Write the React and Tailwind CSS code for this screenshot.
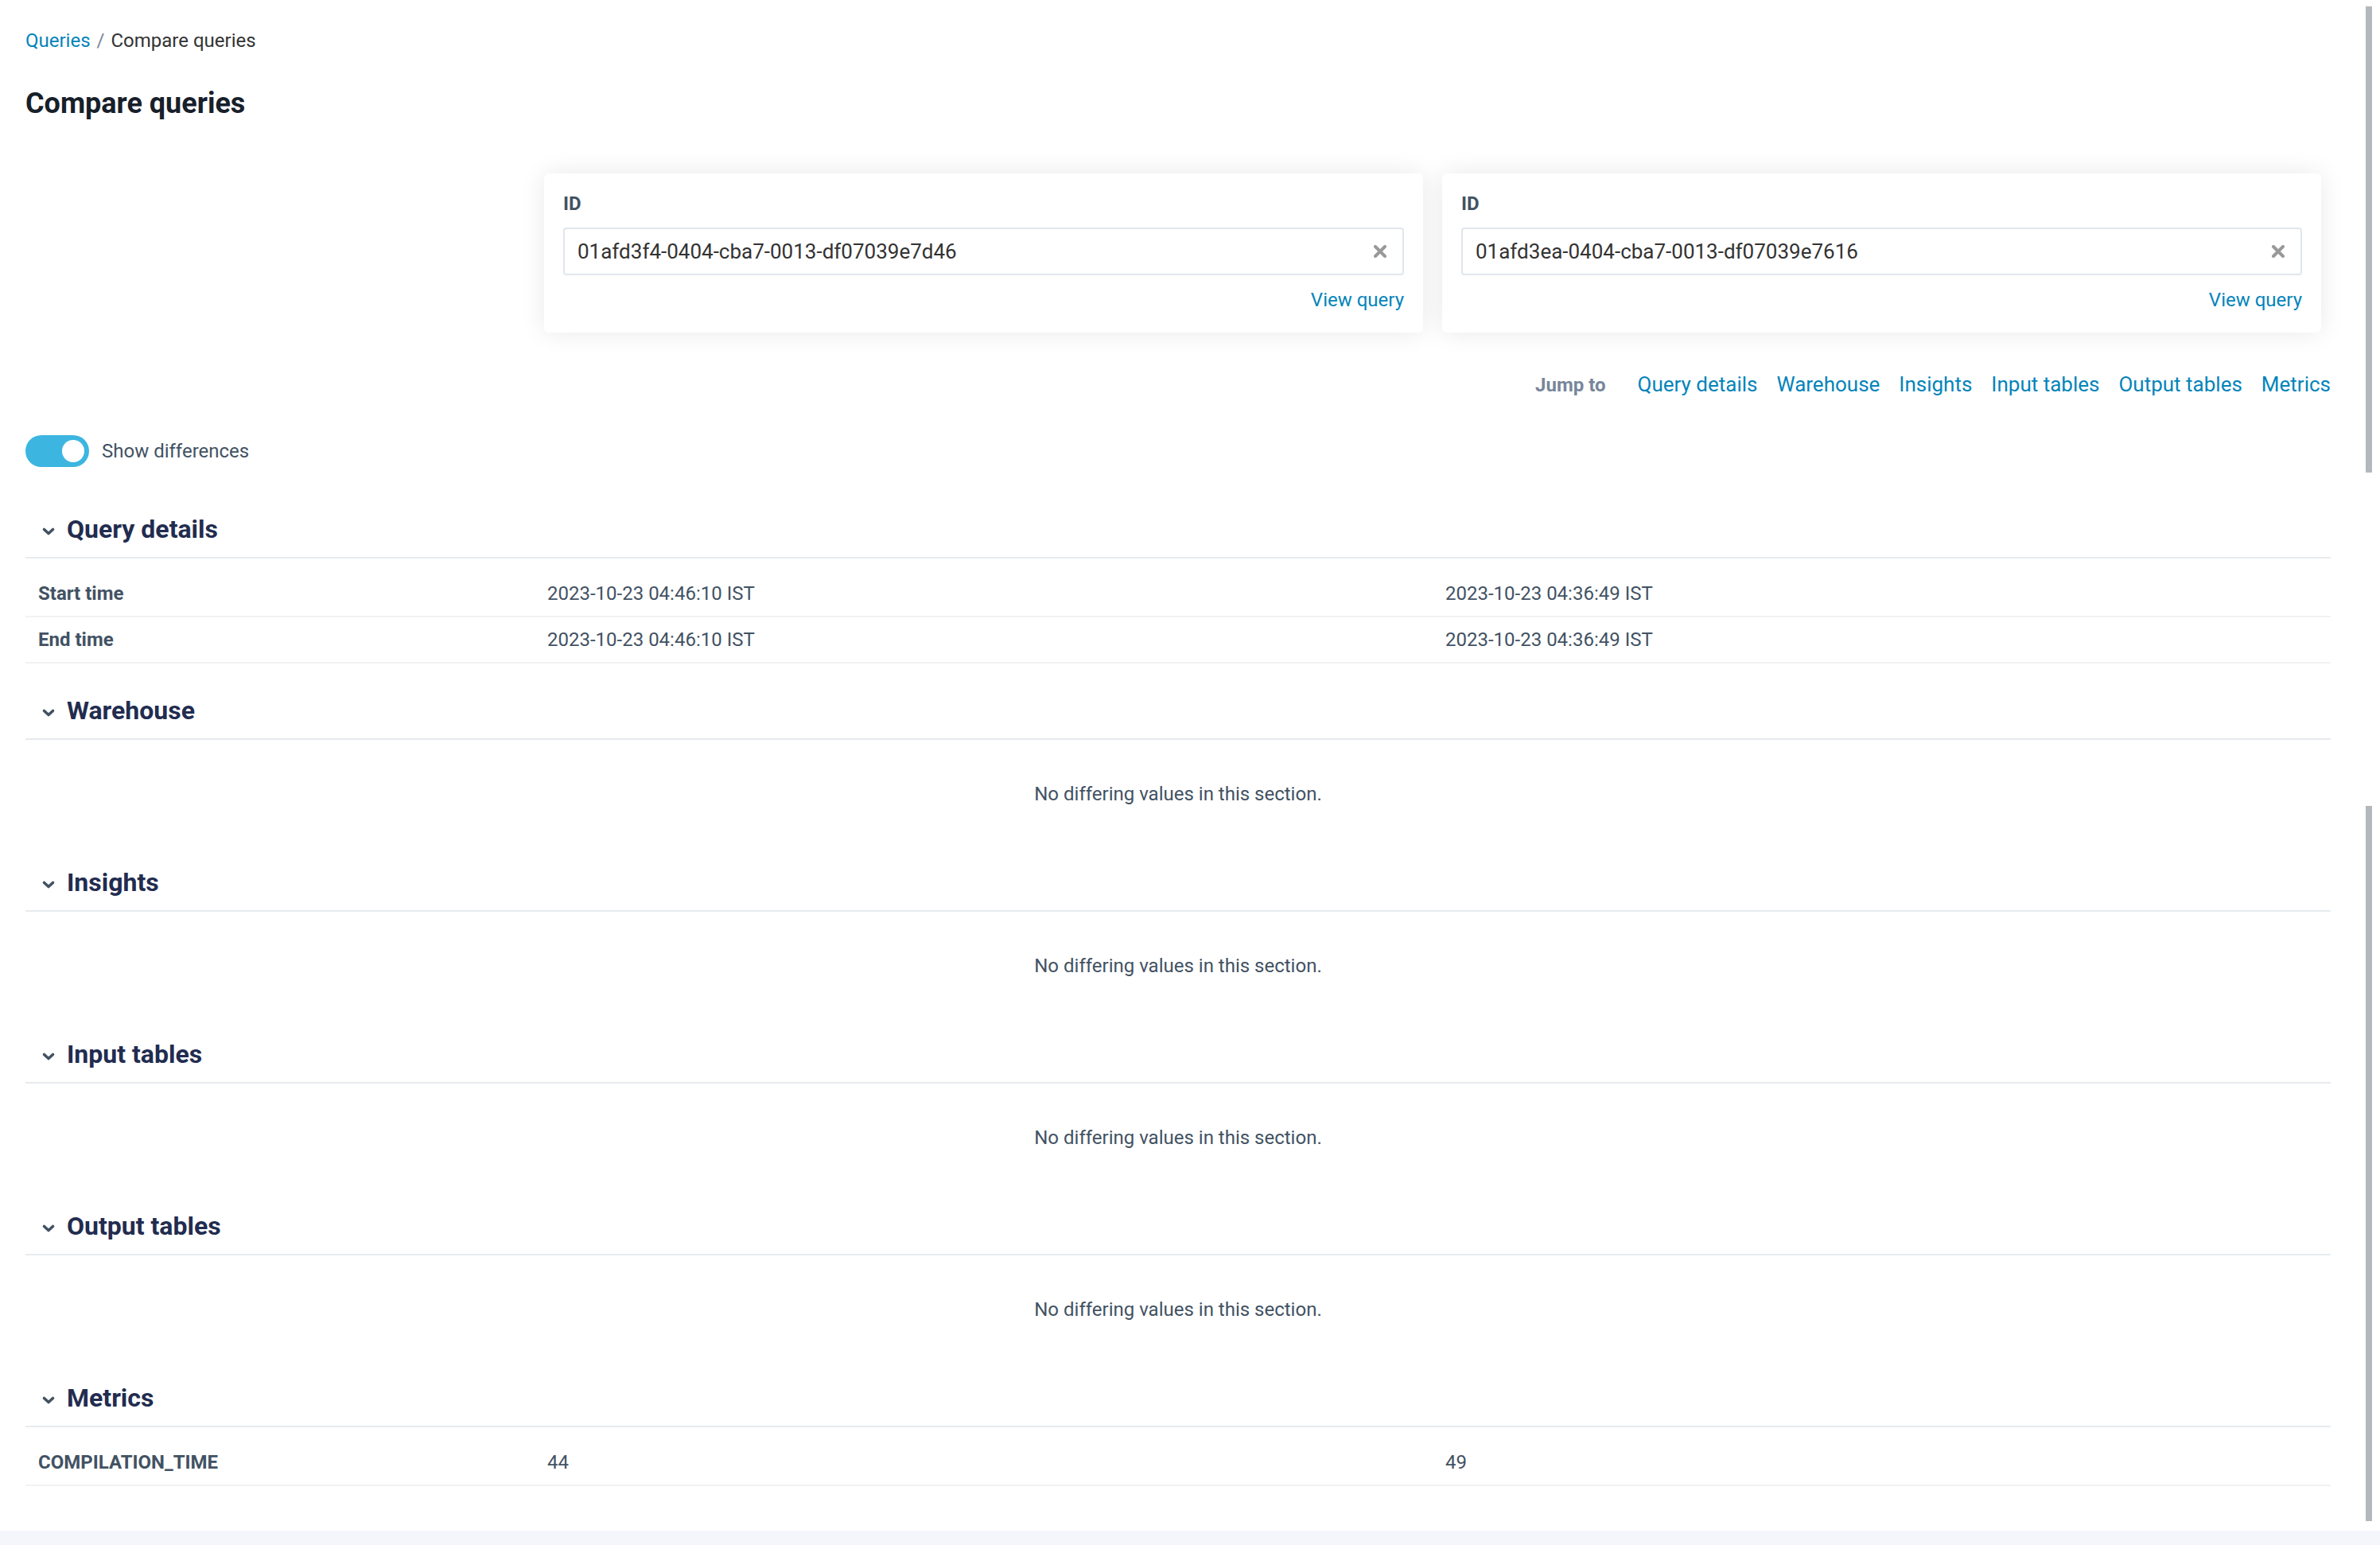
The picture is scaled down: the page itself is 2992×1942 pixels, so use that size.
import { useState } from "react";

const jumpLinks = [
  { id: "query-details", text: "Query details" },
  { id: "warehouse", text: "Warehouse" },
  { id: "insights", text: "Insights" },
  { id: "input-tables", text: "Input tables" },
  { id: "output-tables", text: "Output tables" },
  { id: "metrics", text: "Metrics" },
];

const rowsBySection = {
  "query-details": [
    ["Start time", "2023-10-23 04:46:10 IST", "2023-10-23 04:36:49 IST"],
    ["End time", "2023-10-23 04:46:10 IST", "2023-10-23 04:36:49 IST"],
  ],
  metrics: [["COMPILATION_TIME", "44", "49"]],
};

function QueryCard({ name, initialId }) {
  const [value, setValue] = useState(initialId);

  return (
    <div className="flex flex-1 flex-col rounded-md bg-white px-6 pt-6 pb-[26px] shadow-[0_0_32px_rgba(0,0,0,0.09)]">
      <label htmlFor={name} className="text-[24px] leading-7 font-bold text-[#425263]">ID</label>
      <div className="mt-4 flex h-15 items-center rounded border-2 border-[#e1e6ed] pr-5 pl-4">
        <input
          id={name}
          type="text"
          value={value}
          onChange={(e) => setValue(e.target.value)}
          className="min-w-0 flex-1 bg-transparent text-[26px] leading-8 text-[#333333] outline-none"
        />
        <button type="button" aria-label="Clear" onClick={() => setValue("")}>
          <svg viewBox="0 0 16 16" className="size-4" fill="none" stroke="#999999" strokeWidth="4" strokeLinecap="round">
            <path d="M2 2l12 12M14 2L2 14" />
          </svg>
        </button>
      </div>
      <a href="#query" className="mt-4 self-end text-[24px] leading-[30px] text-[#0484ba]">View query</a>
    </div>
  );
}

function Section({ id, title, rows }) {
  const [open, setOpen] = useState(true);

  return (
    <section id={id}>
      <h2 className="border-b-2 border-[#e6ebef] pt-[38px] pb-3.5">
        <button
          type="button"
          aria-expanded={open}
          onClick={() => setOpen(!open)}
          className="flex w-full items-center gap-3.5 pl-5 text-[32px] leading-[42px] font-bold text-[#222c4f]"
        >
          <svg viewBox="0 0 18 18" className="mt-1.5 size-4.5" fill="none" stroke="#425263" strokeWidth="3.6" strokeLinecap="round" strokeLinejoin="round">
            <path d="M3.5 6.5l5.5 5 5.5-5" />
          </svg>
          {title}
        </button>
      </h2>
      {open && rows && (
        <table className="mt-4 w-full table-fixed border-separate border-spacing-0 text-left text-[24px] leading-7 text-[#425263]">
          <tbody>
            {rows.map(([label, left, right]) => (
              <tr key={label} className="h-[58px]">
                <th scope="row" className="w-160 border-b-2 border-[#f1f2f3] px-4 font-bold">{label}</th>
                <td className="border-b-2 border-[#f1f2f3] px-4">{left}</td>
                <td className="border-b-2 border-[#f1f2f3] px-4">{right}</td>
              </tr>
            ))}
          </tbody>
        </table>
      )}
      {open && !rows && (
        <p className="pt-[54px] pb-[38px] text-center text-[24px] leading-7 text-[#425263]">No differing values in this section.</p>
      )}
    </section>
  );
}

export default function App() {
  const [diffOnly, setDiffOnly] = useState(true);

  return (
    <div className="flex min-h-screen flex-col bg-[#f5f6fb] font-[Roboto,sans-serif]">
      <div className="flex bg-white">
        <main className="min-w-0 flex-1 pt-9 pb-14 pl-8">
          <nav className="flex gap-2 text-[24px] leading-[30px] text-[#333333]">
            <a href="#queries" className="text-[#0484ba]">Queries</a>
            <span className="text-[#77869a]">/</span>
            <span>Compare queries</span>
          </nav>
          <h1 className="mt-11 text-[36px] leading-10 font-bold text-[#17202a]">Compare queries</h1>

          <div className="mt-17 ml-163 mr-3 flex gap-6">
            <QueryCard name="left-id" initialId="01afd3f4-0404-cba7-0013-df07039e7d46" />
            <QueryCard name="right-id" initialId="01afd3ea-0404-cba7-0013-df07039e7616" />
          </div>

          <nav className="mt-12 flex items-baseline justify-end gap-6 text-[26px] leading-[34px] text-[#0484ba]">
            <span className="mr-4 text-[24px] font-bold text-[#77869a]">Jump to</span>
            {jumpLinks.map((link) => (
              <a key={link.id} href={`#${link.id}`}>{link.text}</a>
            ))}
          </nav>

          <label className="mt-[46px] flex w-fit items-center gap-4 text-[24px] leading-8 text-[#425263]">
            <input type="checkbox" role="switch" checked={diffOnly} onChange={() => setDiffOnly(!diffOnly)} className="peer sr-only" />
            <span className="flex h-10 w-20 items-center rounded-full bg-[#b3b9c1] px-1.5 peer-checked:justify-end peer-checked:bg-[#3cb6e0]">
              <span className="size-7 rounded-full bg-white"></span>
            </span>
            Show differences
          </label>

          <div className="mt-[19px]">
            {jumpLinks.map((link) => (
              <Section key={link.id} id={link.id} title={link.text} rows={rowsBySection[link.id]} />
            ))}
          </div>
        </main>

        {/* scroll thumbs */}
        <div className="ml-11 mr-2.5 flex w-2 flex-col justify-between pt-2 pb-3">
          <div className="h-[586px] bg-[#b3b8bf]"></div>
          <div className="h-[899px] bg-[#b3b8bf]"></div>
        </div>
      </div>
    </div>
  );
}
